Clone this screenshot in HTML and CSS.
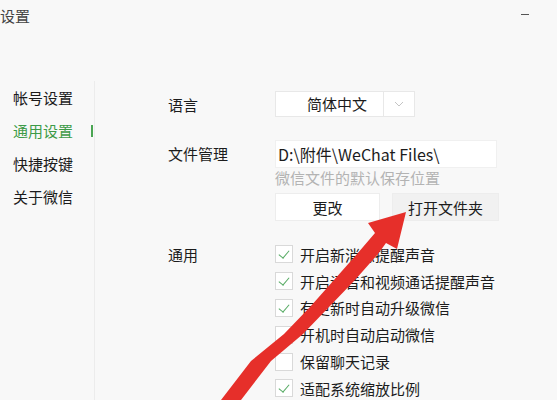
FILE: index.html
```html
<!DOCTYPE html>
<html lang="zh-CN">
<head>
<meta charset="utf-8">
<title>设置</title>
<link rel="stylesheet" href="styles.css">
</head>
<body>
<div class="window">
  <header class="titlebar">
    <span class="title">设置</span>
    <span class="minimize"></span>
  </header>
  <div class="body">
    <nav class="sidebar">
      <div class="nav-item">帐号设置</div>
      <div class="nav-item active">通用设置</div>
      <div class="nav-item">快捷按键</div>
      <div class="nav-item">关于微信</div>
    </nav>
    <main class="content">
      <div class="row row-lang">
        <div class="label">语言</div>
        <div class="select">
          <span class="select-value">简体中文</span>
          <span class="select-arrow">
            <svg width="10" height="6" viewBox="0 0 10 6"><path d="M1 1 L5 5 L9 1" fill="none" stroke="#c4c4c4" stroke-width="1"/></svg>
          </span>
        </div>
      </div>
      <div class="row row-file">
        <div class="label">文件管理</div>
        <div class="file-block">
          <div class="path-input">D:\附件\WeChat Files\</div>
          <div class="hint">微信文件的默认保存位置</div>
          <div class="buttons">
            <button class="btn btn-white">更改</button>
            <button class="btn btn-gray">打开文件夹</button>
          </div>
        </div>
      </div>
      <div class="row row-general">
        <div class="label">通用</div>
        <ul class="checks">
          <li class="check-item"><span class="box checked"></span>开启新消息提醒声音</li>
          <li class="check-item"><span class="box checked"></span>开启语音和视频通话提醒声音</li>
          <li class="check-item"><span class="box checked"></span>有更新时自动升级微信</li>
          <li class="check-item"><span class="box"></span>开机时自动启动微信</li>
          <li class="check-item"><span class="box"></span>保留聊天记录</li>
          <li class="check-item"><span class="box checked"></span>适配系统缩放比例</li>
        </ul>
      </div>
    </main>
  </div>
  <svg class="annotation" width="557" height="400" viewBox="0 0 557 400">
    <polygon fill="#e62f2a" points="221,400 251,361 284,334 310,307 334,280 357,254 375,233 368,223 406,212 397,249 386,243 378,254 355,280 329,307 303,334 271,361 241,400"/>
  </svg>
</div>
</body>
</html>
```

FILE: styles.css
```css
* {
  box-sizing: border-box;
}

html, body {
  margin: 0;
  padding: 0;
}

body {
  width: 557px;
  height: 400px;
  overflow: hidden;
  background: #f8f8f8;
  font-family: "Noto Sans CJK SC", "Noto Sans", sans-serif;
  color: #1c1c1c;
}

.window {
  position: relative;
  width: 557px;
  height: 400px;
  overflow: hidden;
}

.titlebar {
  height: 32px;
  display: flex;
  align-items: center;
  justify-content: space-between;
  padding: 0 28px 0 0;
}

.title {
  font-size: 15px;
  line-height: 32px;
  color: #444;
  margin-top: 0;
}

.minimize {
  width: 8px;
  height: 1px;
  background: #555;
  margin-top: -4px;
}

.body {
  display: flex;
}

.sidebar {
  width: 95px;
  margin-top: 49px;
  border-right: 1px solid #ececec;
  height: 330px;
}

.nav-item {
  height: 33px;
  line-height: 33px;
  font-size: 15px;
  padding-left: 13px;
  padding-right: 1px;
  display: flex;
  justify-content: space-between;
  align-items: center;
  color: #1c1c1c;
}

.nav-item.active {
  color: #3d9b47;
}

.nav-item.active::after {
  content: "";
  width: 2px;
  height: 12px;
  background: #4aa552;
}

.content {
  flex: 1;
  padding-left: 73px;
}

.row {
  display: flex;
}

.label {
  width: 107px;
  font-size: 15px;
  color: #1c1c1c;
}

.row-lang {
  margin-top: 59px;
  align-items: center;
}

.select {
  width: 140px;
  height: 26px;
  background: #fff;
  border: 1px solid #e8e8e8;
  display: flex;
}

.select-value {
  width: 108px;
  border-right: 1px solid #e8e8e8;
  padding-left: 31px;
  font-size: 15px;
  line-height: 24px;
}

.select-arrow {
  flex: 1;
  display: flex;
  align-items: center;
  justify-content: center;
}

.row-file {
  margin-top: 23px;
  align-items: flex-start;
}

.row-file .label {
  line-height: 28px;
}

.file-block {
  display: flex;
  flex-direction: column;
}

.path-input {
  width: 222px;
  height: 28px;
  background: #fff;
  border: 1px solid #f0f0f0;
  font-size: 16px;
  line-height: 26px;
  padding-left: 2px;
  color: #1c1c1c;
}

.hint {
  font-size: 15px;
  line-height: 20px;
  color: #b3b3b3;
}

.buttons {
  display: flex;
  gap: 12px;
  margin-top: 5px;
}

.btn {
  height: 28px;
  font-family: inherit;
  font-size: 15px;
  color: #1c1c1c;
  padding: 0;
  border: 1px solid #ededed;
}

.btn-white {
  width: 105px;
  background: #fff;
}

.btn-gray {
  width: 107px;
  background: #f1f1f1;
}

.row-general {
  margin-top: 20px;
  align-items: flex-start;
}

.row-general .label {
  line-height: 27px;
}

.checks {
  list-style: none;
  margin: 0;
  padding: 0;
}

.check-item {
  height: 26.8px;
  display: flex;
  align-items: center;
  font-size: 15px;
  color: #1c1c1c;
}

.box {
  width: 18px;
  height: 18px;
  border: 1px solid #d9d9d9;
  background: #fff;
  margin-right: 7px;
  position: relative;
}

.box.checked::after {
  content: "";
  position: absolute;
  left: 5px;
  top: 2px;
  width: 5px;
  height: 9px;
  border-right: 1px solid #55aa62;
  border-bottom: 1px solid #55aa62;
  transform: rotate(40deg);
}

.annotation {
  position: absolute;
  left: 0;
  top: 0;
  pointer-events: none;
}
```
